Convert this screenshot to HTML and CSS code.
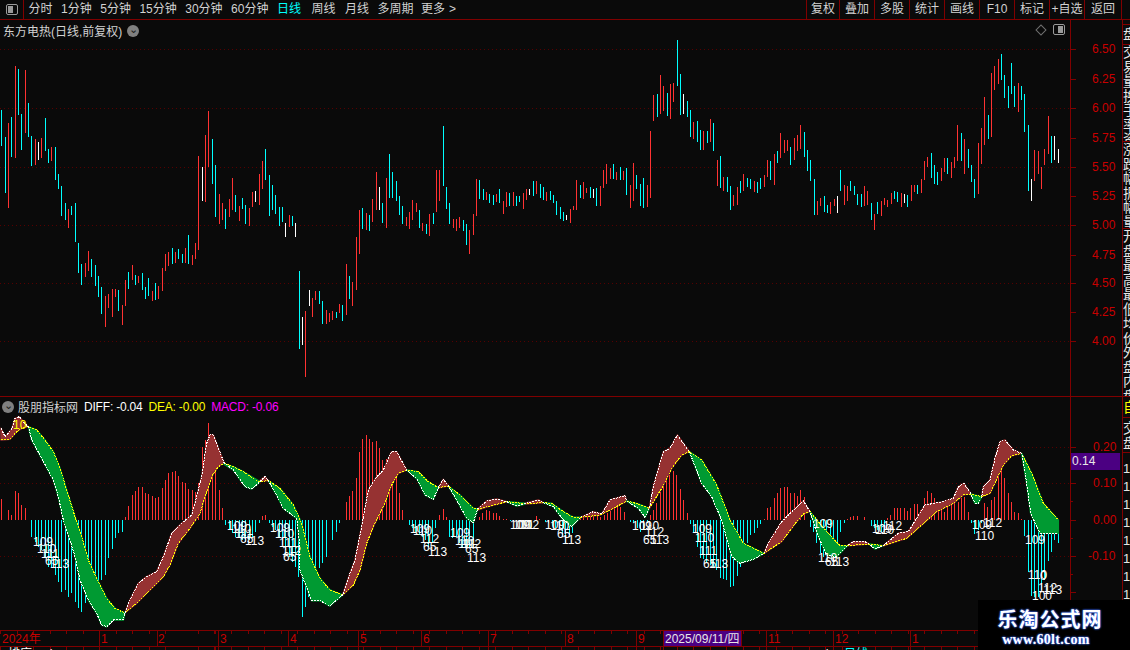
FILE: index.html
```html
<!DOCTYPE html>
<html lang="zh-CN">
<head>
<meta charset="utf-8">
<title>东方电热</title>
<link rel="stylesheet" href="styles.css">
</head>
<body>
<div class="app">
  <header class="toolbar">
    <div class="panel-toggle"><span class="toggle-icon"><i></i></span></div>
    <nav class="periods">
      <span>分时</span><span>1分钟</span><span>5分钟</span><span>15分钟</span><span>30分钟</span><span>60分钟</span>
      <span class="active">日线</span><span class="week">周线</span><span>月线</span><span>多周期</span><span class="more">更多<b>&gt;</b></span>
    </nav>
    <div class="actions">
      <span class="first">复权</span><span>叠加</span><span>多股</span><span>统计</span><span>画线</span><span>F10</span><span>标记</span><span>+自选</span><span class="last">返回</span>
    </div>
  </header>

  <section class="row row-kline">
    <div class="plot">
      <div class="plot-title title-kline">
        <span>东方电热(日线,前复权)</span><span class="chev">&#8964;</span>
      </div>
      <div class="plot-tools">
        <span class="diamond"></span><span class="toggle-icon mirrored"><i></i></span>
      </div>
      <svg class="chart chart-kline" viewBox="0 20 1122 376" aria-label="K线图">
        <path class="grid" d="M0 49.5H1070M0 108.5H1070M0 167.5H1070M0 225.5H1070M0 283.5H1070M0 341.5H1070"/>
        <path class="axis" d="M1070.5 20V396M1070 49.5h6M1070 79.5h6M1070 108.5h6M1070 138.5h6M1070 167.5h6M1070 196.5h6M1070 225.5h6M1070 255.5h6M1070 283.5h6M1070 312.5h6M1070 341.5h6"/>
        <g class="ax">
          <text x="1092" y="53">6.50</text><text x="1092" y="83">6.25</text><text x="1092" y="112">6.00</text><text x="1092" y="142">5.75</text><text x="1092" y="171">5.50</text><text x="1092" y="200">5.25</text><text x="1092" y="229">5.00</text><text x="1092" y="259">4.75</text><text x="1092" y="287">4.50</text><text x="1092" y="316">4.25</text><text x="1092" y="345">4.00</text>
        </g>
        <g transform="translate(0,40) scale(.33333)">
          <path class="k-red" d="M25 249V504M46 78V354M76 90V279M106 297V375M124 294V354M154 321V363M205 507V564M256 669V711M265 633V693M316 768V861M325 762V804M337 747V831M346 747V771M367 795V855M376 720V798M397 675V720M415 708V729M457 753V783M475 738V777M487 684V753M496 642V693M505 636V678M526 636V669M556 624V669M577 645V675M586 609V657M595 348V630M616 285V486M625 213V381M658 462V552M667 489V540M688 477V531M697 414V510M718 498V543M748 504V558M757 456V501M778 402V495M787 363V447M868 525V561"/>
          <path class="k-cyan" d="M4 210V318M16 291V459M34 231V351M55 87V225M64 222V330M85 189V291M94 288V378M136 234V333M145 327V369M166 321V420M175 402V447M184 438V528M196 489V540M214 498V525M226 489V606M235 609V699M244 672V735M274 657V711M286 675V738M295 708V771M304 741V822M355 750V813M385 696V747M406 705V735M427 699V750M436 741V777M445 714V768M466 729V780M517 624V672M535 627V657M547 642V669M565 585V672M637 297V432M646 375V531M676 507V567M706 465V516M727 474V507M736 495V552M796 327V420M808 405V528M817 435V510M826 465V522M838 501V558M847 501V546M877 528V558"/>
          <path class="k-white" d="M115 306V360M607 381V483M766 453V486M856 549V591M886 549V591"/>
        </g>
        <g transform="translate(290,120) scale(.33333)">
          <path class="k-red" d="M46 573V771M67 534V591M76 513V540M109 570V612M118 579V606M127 573V600M148 552V579M169 432V585M187 486V558M199 351V510M208 270V402M229 279V330M247 237V306M259 156V270M289 174V324M349 291V318M358 276V327M367 240V300M379 249V276M397 309V333M418 282V348M439 150V276M448 150V243M490 297V324M499 297V333M508 291V324M538 330V402M550 282V345M559 177V288M589 216V240M619 222V246M640 243V282M649 216V261M670 216V258M700 219V267M709 207V240M739 183V222M769 216V243M841 267V309M850 258V270M859 180V270M880 186V237M889 204V219"/>
          <path class="k-cyan" d="M28 453V687M88 513V552M97 543V612M139 576V594M157 555V603M178 468V537M217 264V327M238 285V333M277 249V309M298 102V234M307 156V234M319 183V243M328 228V285M337 258V312M388 270V324M409 312V342M430 279V312M460 18V198M469 201V267M478 249V312M520 300V333M529 312V375M568 180V237M580 207V240M598 222V249M610 225V255M628 207V249M658 219V258M679 228V258M688 228V246M730 183V228M751 192V234M760 201V240M781 213V240M790 225V249M799 243V285M811 261V297M820 276V303M871 195V234"/>
          <path class="k-white" d="M37 591V675M58 510V558M268 201V270M718 207V225M829 285V300"/>
        </g>
        <g transform="translate(590,30) scale(.33333)">
          <path class="k-red" d="M31 468V528M40 420V474M49 402V462M61 414V447M79 426V450M100 423V450M121 465V534M130 399V513M172 465V531M181 303V504M190 195V273M211 135V252M220 168V243M241 162V267M250 159V216M310 276V327M340 303V360M361 267V336M382 390V468M400 441V483M430 495V528M442 471V525M460 432V483M493 453V486M523 435V471M532 390V441M553 372V465M571 309V384M583 330V369M592 330V363M613 324V390M622 315V363M631 285V357M682 513V555M691 504V528M721 516V552M733 507V528M763 465V525M772 468V513"/>
          <path class="k-cyan" d="M0 471V504M19 474V528M70 402V447M91 411V450M109 414V495M139 435V477M151 462V528M160 444V534M202 192V261M232 189V258M262 30V168M271 132V255M292 213V261M301 240V321M322 273V336M331 300V360M352 303V339M370 279V363M391 378V474M412 441V486M421 468V540M451 453V489M472 444V471M481 447V477M502 456V489M511 444V477M541 393V450M562 363V399M601 351V405M643 306V381M652 360V423M661 390V453M673 447V555M703 498V546M712 525V549M751 420V483"/>
          <path class="k-white" d="M10 477V504M280 192V252M742 498V549"/>
        </g>
        <g transform="translate(850,30) scale(.33333)">
          <path class="k-red" d="M43 468V528M52 483V525M73 552V600M94 513V558M103 504V525M112 510V531M124 489V522M154 489V531M184 465V513M193 465V486M214 447V489M223 393V450M232 381V411M274 414V453M283 384V426M304 396V444M313 381V414M322 285V393M343 327V432M385 339V492M394 294V402M403 201V345M424 129V321M433 108V180M445 87V162M505 159V246M553 360V453M565 363V432M574 411V477M583 357V405M595 258V372"/>
          <path class="k-cyan" d="M1 453V483M13 468V495M22 492V525M34 492V531M64 519V570M82 516V552M133 483V507M142 486V516M172 495V531M202 465V492M244 369V444M253 405V462M262 426V465M292 384V432M334 309V393M355 357V414M364 405V456M373 447V504M415 255V327M454 72V150M463 135V204M475 168V234M484 99V192M493 168V231M514 168V210M523 192V306M535 285V483M604 318V399"/>
          <path class="k-white" d="M163 492V519M544 447V513M613 318V390M625 357V399"/>
        </g>
      </svg>
    </div>
    <aside class="side">
      <div class="side-sec sec-blank"></div>
      <div class="side-sec sec-box"><p class="side-text">盘</p></div>
      <div class="side-sec sec-a"><p class="side-text">交易量换手率资金</p></div>
      <div class="side-sec sec-b"><p class="side-text">涨跌幅振幅量比</p></div>
      <div class="side-sec sec-c"><p class="side-text">开盘最高最低均价外盘内盘总手总额流通市值</p></div>
    </aside>
  </section>

  <section class="row row-macd">
    <div class="plot">
      <div class="plot-title title-macd">
        <span class="chev">&#8964;</span><span class="indicator">股朋指标网</span>
        <span class="v-diff">DIFF: -0.04</span><span class="v-dea">DEA: -0.00</span><span class="v-macd">MACD: -0.06</span>
      </div>
      <svg class="chart chart-macd" viewBox="0 397 1122 233" aria-label="MACD指标">
        <path class="grid" d="M0 447.5H1070M0 483.5H1070M0 556.5H1070"/>
        <path class="axis" d="M1070.5 397V630M1070 447.5h6M1070 465.5h3M1070 483.5h6M1070 501.5h3M1070 520.5h6M1070 538.5h3M1070 556.5h6M1070 574.5h3M1070 592.5h6"/>
        <rect class="tag" x="1071" y="453" width="49" height="17"/>
        <text class="tag-text" x="1072" y="465">0.14</text>
        <g class="ax">
          <text x="1093" y="451">0.20</text><text x="1093" y="487">0.10</text><text x="1093" y="524">0.00</text><text x="1088" y="560">-0.10</text>
        </g>

        <g transform="translate(0,390) scale(.33333)">
          <path class="h-red" d="M4 391V328M25 391V360M34 391V375M46 391V303M55 391V309M64 391V345M76 391V354M85 391V390M376 391V380M385 391V347M397 391V315M406 391V302M415 391V291M427 391V291M436 391V310M445 391V312M457 391V318M466 391V325M475 391V322M487 391V295M496 391V270M505 391V248M517 391V245M526 391V243M535 391V258M547 391V275M556 391V280M565 391V297M577 391V300M586 391V305M595 391V280M607 391V170M616 391V150M625 391V98M637 391V135M646 391V240M658 391V300M667 391V355M787 391V378M796 391V375"/>
          <path class="h-cyan" d="M94 391V442M106 391V455M115 391V470M124 391V480M136 391V505M145 391V530M154 391V535M166 391V555M175 391V575M184 391V606M196 391V600M205 391V622M214 391V610M226 391V635M235 391V655M244 391V665M256 391V640M265 391V620M274 391V610M286 391V590M295 391V580M304 391V570M316 391V555M325 391V505M337 391V478M346 391V445M355 391V430M367 391V425M676 391V405M688 391V420M697 391V430M706 391V440M718 391V445M727 391V450M736 391V455M748 391V450M757 391V440M766 391V425M778 391V400M808 391V400M817 391V410M826 391V420M838 391V440M847 391V465M856 391V480M868 391V500M877 391V515M886 391V530M895 391V560M907 391V680M916 391V650M925 391V620M937 391V560M946 391V545M958 391V533M967 391V520M979 391V500"/>
        </g>
        <g transform="translate(330,400) scale(.33333)">
          <path class="h-red" d="M49 361V305M58 361V288M67 361V272M79 361V235M88 361V155M97 361V118M109 361V105M118 361V118M127 361V125M139 361V123M148 361V145M157 361V180M169 361V178M178 361V205M187 361V215M199 361V225M208 361V280M217 361V330M229 361V359M328 361V345M340 361V326M349 361V350M448 361V350M457 361V340M469 361V330M478 361V332M490 361V340M499 361V340M508 361V348M520 361V357M529 361V357M619 361V347M628 361V358M751 361V355M760 361V352M772 361V350M781 361V345M790 361V335M802 361V345M811 361V350M823 361V345M832 361V340M841 361V333M853 361V323M862 361V318M871 361V322M883 361V335M892 361V360"/>
          <path class="h-cyan" d="M7 361V420M19 361V395M28 361V370M238 361V375M247 361V385M256 361V395M268 361V405M277 361V410M286 361V420M295 361V440M307 361V430M316 361V385M358 361V410M367 361V413M379 361V412M388 361V430M397 361V440M409 361V445M418 361V440M430 361V420M541 361V363M550 361V365M646 361V365M655 361V370M667 361V378M676 361V385M688 361V390M697 361V410M706 361V430M718 361V405M727 361V400M901 361V365M910 361V370M922 361V385M931 361V395M940 361V385M952 361V370"/>
        </g>
        <g transform="translate(640,400) scale(.33333)">
          <path class="h-red" d="M31 361V345M40 361V330M49 361V310M61 361V275M70 361V258M79 361V240M88 361V225M100 361V213M109 361V225M121 361V267M130 361V300M142 361V338M373 361V358M382 361V325M391 361V320M403 361V295M412 361V280M421 361V263M433 361V262M442 361V262M451 361V280M463 361V278M472 361V288M481 361V270M493 361V290M622 361V358M631 361V352M640 361V348M652 361V348M661 361V360M673 361V350M682 361V360M742 361V355M751 361V345M763 361V325M772 361V325"/>
          <path class="h-cyan" d="M151 361V372M160 361V400M172 361V440M181 361V473M190 361V478M199 361V485M211 361V495M220 361V505M229 361V510M241 361V535M250 361V537M259 361V540M271 361V562M280 361V558M292 361V528M301 361V500M310 361V455M322 361V430M331 361V405M343 361V400M352 361V385M361 361V372M511 361V380M520 361V395M529 361V430M541 361V460M550 361V470M559 361V465M571 361V445M580 361V420M592 361V425M601 361V395M613 361V370M694 361V378M703 361V385M712 361V390M724 361V395M733 361V380"/>
        </g>
        <g transform="translate(900,390) scale(.33333)">
          <path class="h-red" d="M3 391V354M13 391V354M22 391V362M31 391V355M43 391V343M52 391V342M61 391V360M73 391V325M82 391V304M94 391V310M103 391V325M115 391V350M124 391V345M133 391V365M142 391V350M154 391V345M163 391V340M175 391V335M184 391V325M193 391V322M205 391V365M253 391V338M262 391V350M274 391V330M283 391V320M295 391V245M304 391V235M313 391V265M325 391V310M334 391V335M343 391V365M355 391V370M364 391V388"/>
          <path class="h-cyan" d="M214 391V400M223 391V432M235 391V420M244 391V400M373 391V438M385 391V545M394 391V618M403 391V620M415 391V620M424 391V600M433 391V570M445 391V512M454 391V485M463 391V450M475 391V458"/>
        </g>

        <g transform="translate(0,390) scale(.33333)">
          <path class="up" d="M3 115L15 140L35 118L45 85L58 80L70 95L85 110L70 112L50 125L30 148L3 150ZM375 668L390 630L415 580L440 560L470 545L490 500L515 430L545 400L575 375L590 320L605 260L620 160L630 135L640 135L672 218L655 230L635 260L615 320L600 370L570 415L535 460L510 525L490 560L440 610L410 640ZM780 272L795 260L805 272Z"/>
          <path class="dn" d="M85 110L95 150L125 205L160 270L175 320L190 390L210 450L225 500L240 570L265 630L290 670L305 705L320 710L340 690L370 690L375 668L370 667L345 655L320 625L290 565L265 510L245 440L225 380L200 300L180 235L160 185L135 150L110 120ZM672 222L700 240L735 290L755 297L775 280L780 275L730 245L700 230ZM805 272L830 315L850 355L890 385L900 470L900 540L915 580L935 632L960 632L990 648L990 600L960 565L930 500L905 400L880 345L840 295Z"/>
          <path class="dea" d="M3 150L30 148L50 125L70 112L85 110L110 120L135 150L160 185L180 235L200 300L225 380L245 440L265 510L290 565L320 625L345 655L370 667L375 668L410 640L440 610L490 560L510 525L535 460L570 415L600 370L615 320L635 260L655 230L672 220L700 230L730 245L775 275L805 272L840 295L880 345L905 400L930 500L960 565L990 600"/>
          <path class="diff" d="M3 115L15 140L35 118L45 85L58 80L70 95L85 110L95 150L125 205L160 270L175 320L190 390L210 450L225 500L240 570L265 630L290 670L305 705L320 710L340 690L370 690L375 668L390 630L415 580L440 560L470 545L490 500L515 430L545 400L575 375L590 320L605 260L620 160L630 135L640 135L672 218L700 240L735 290L755 297L775 280L795 260L805 272L830 315L850 355L890 385L900 470L900 540L915 580L935 632L960 632L990 648"/>
        </g>
        <g transform="translate(330,400) scale(.33333)">
          <path class="up" d="M38 585L60 520L75 480L95 380L115 270L140 230L160 210L185 155L200 155L230 210L205 220L185 255L160 320L130 380L110 430L90 510L70 555ZM325 263L340 238L355 258ZM443 327L470 303L500 297L530 305L480 318L443 330ZM585 310L625 300L640 308L585 312ZM752 352L790 335L815 342L840 300L885 287L890 303L850 325L810 345Z"/>
          <path class="dn" d="M0 570L38 585L0 617ZM230 210L262 238L285 285L310 298L325 263L295 245L265 215ZM355 258L380 300L410 355L430 368L443 327L430 325L390 285ZM530 305L560 318L585 312L585 310ZM640 308L670 320L700 360L725 380L752 352L730 352L700 335L665 310ZM890 303L925 325L945 352L958 325L925 312Z"/>
          <path class="dea" d="M0 570L38 585L70 555L90 510L110 430L130 380L160 320L185 255L205 220L230 210L265 215L295 245L325 263L355 258L390 285L430 325L443 328L480 318L530 305L585 311L640 308L665 310L700 335L730 352L752 352L810 345L850 325L890 303L925 312L958 325"/>
          <path class="diff" d="M0 617L38 585L60 520L75 480L95 380L115 270L140 230L160 210L185 155L200 155L230 210L262 238L285 285L310 298L325 263L340 238L355 258L380 300L410 355L430 368L443 327L470 303L500 297L530 305L560 318L585 311L625 300L640 308L670 320L700 360L725 380L752 352L790 335L815 342L840 300L885 287L890 303L925 325L945 352L958 325"/>
        </g>
        <g transform="translate(640,400) scale(.33333)">
          <path class="up" d="M28 325L40 260L70 155L90 145L112 105L148 155L125 165L95 205L65 265ZM372 460L385 430L425 365L490 302L510 335L490 342L470 365L425 425ZM622 437L640 425L675 425L687 432Z"/>
          <path class="dn" d="M148 155L185 250L215 290L245 360L275 470L300 490L340 478L372 460L310 430L270 360L230 255L185 180ZM510 335L535 410L560 465L590 470L622 437L600 437L560 395ZM687 432L705 447L730 437Z"/>
          <path class="dea" d="M28 325L65 265L95 205L125 165L148 155L185 180L230 255L270 360L310 430L372 460L425 425L470 365L490 342L510 335L560 395L600 437L622 437L687 432L730 437"/>
          <path class="diff" d="M28 325L40 260L70 155L90 145L112 105L148 155L185 250L215 290L245 360L275 470L300 490L340 478L372 460L385 430L425 365L490 302L510 335L535 410L560 465L590 470L622 437L640 425L675 425L687 432L705 447L730 437"/>
        </g>
        <g transform="translate(900,390) scale(.33333)">
          <path class="up" d="M-50 467L-5 430L25 425L75 345L130 335L160 325L175 290L192 280L212 310L190 315L160 340L110 365L20 445ZM245 320L250 290L270 270L285 205L300 155L315 150L340 180L365 190L335 197L310 225L270 310Z"/>
          <path class="dn" d="M212 312L225 340L235 340L245 320ZM365 190L380 280L392 370L420 430L475 430L475 390L430 340L395 250Z"/>
          <path class="dea" d="M-50 467L20 445L110 365L160 340L190 315L212 312L245 320L270 310L310 225L335 197L365 190L395 250L430 340L475 390"/>
          <path class="diff" d="M-50 467L-5 430L25 425L75 345L130 335L160 325L175 290L192 280L212 310L225 340L235 340L245 320L250 290L270 270L285 205L300 155L315 150L340 180L365 190L380 280L392 370L420 430L475 430"/>
        </g>

        <text class="sig-y" x="13" y="429">10</text>
        <g class="sig">
          <text x="33" y="546">109</text><text x="37" y="553">110</text><text x="41" y="558">111</text><text x="45" y="565">65</text><text x="50" y="568">113</text>
          <text x="227" y="530">109</text><text x="232" y="533">110</text><text x="235" y="538">111</text><text x="240" y="543">65</text><text x="245" y="545">113</text>
          <text x="270" y="532">109</text><text x="275" y="538">110</text><text x="279" y="547">111</text><text x="282" y="555">112</text><text x="283" y="561">65</text>
          <text x="410" y="533">109</text><text x="413" y="535">110</text><text x="420" y="543">112</text><text x="423" y="551">65</text><text x="428" y="556">113</text>
          <text x="450" y="537">109</text><text x="455" y="545">110</text><text x="458" y="548">111</text><text x="462" y="548">112</text><text x="465" y="553">65</text><text x="467" y="562">113</text>
          <text x="510" y="529">109</text><text x="513" y="529">110</text><text x="516" y="529">111</text><text x="520" y="529">112</text>
          <text x="545" y="529">109</text><text x="550" y="530">110</text><text x="557" y="538">65</text><text x="562" y="544">113</text>
          <text x="632" y="530">109</text><text x="640" y="530">110</text><text x="645" y="536">112</text><text x="643" y="544">65</text><text x="650" y="544">113</text>
          <text x="692" y="533">109</text><text x="695" y="542">110</text><text x="699" y="555">111</text><text x="703" y="568">65</text><text x="709" y="568">113</text>
          <text x="813" y="528">109</text><text x="818" y="562">110</text><text x="825" y="566">65</text><text x="830" y="566">113</text>
          <text x="872" y="533">109</text><text x="875" y="534">110</text><text x="883" y="530">112</text>
          <text x="972" y="529">109</text><text x="975" y="540">110</text><text x="983" y="527">112</text>
          <text x="1025" y="544">109</text><text x="1028" y="579">110</text><text x="1040" y="580">0</text><text x="1038" y="592">112</text><text x="1043" y="594">113</text><text x="1032" y="600">100</text>
        </g>
      </svg>
    </div>
    <aside class="side">
      <div class="side-sec sec-d"><p class="side-text side-yellow">自</p></div>
      <div class="side-sec sec-e"><p class="side-text">交盘</p></div>
      <div class="side-sec sec-f"><p class="side-text side-digits">1 1 1 1 1 1 1 1 1</p></div>
    </aside>
  </section>

  <footer class="timeline">
    <svg class="chart chart-time" viewBox="0 630 1130 20" aria-label="时间轴">
      <path class="axis" d="M0 630.5H1130M0 646.5H1130M99.5 630V650M157.5 630V646M218.5 630V650M288.5 630V646M358.5 630V650M421.5 630V646M488.5 630V650M565.5 630V646M636.5 630V650M663.5 630V650M741.5 630V646M766.5 630V650M833.5 630V650M910.5 630V650"/>
      <path class="ticks" d="M0 632H1130M0 648H1130"/>
      <rect class="tag" x="664" y="631" width="77" height="15"/>
      <text class="tag-text" x="665" y="643">2025/09/11/四</text>
      <g class="ax">
        <text x="2" y="643">2024年</text><text x="101" y="643">1</text><text x="158" y="643">2</text><text x="220" y="643">3</text><text x="290" y="643">4</text><text x="360" y="643">5</text><text x="423" y="643">6</text><text x="490" y="643">7</text><text x="567" y="643">8</text><text x="638" y="643">9</text><text x="768" y="643">11</text><text x="835" y="643">12</text><text x="912" y="643">1</text>
      </g>
      <text class="strip-white" x="8" y="658">排序</text>
      <text class="strip-white" x="50" y="658">'</text>
      <text class="strip-white" x="826" y="658">'</text>
      <text class="strip-cyan" x="844" y="658">日线</text>
    </svg>
  </footer>

  <aside class="watermark">
    <div class="wm-name">乐淘公式网</div>
    <div class="wm-url">www.60lt.com</div>
  </aside>
</div>
</body>
</html>
```

FILE: styles.css
```css
* { box-sizing: border-box; margin: 0; padding: 0; }

html, body { background: #0a0a0a; }

body {
  width: 1130px;
  height: 650px;
  overflow: hidden;
  font-family: "Liberation Sans", "Noto Sans CJK SC", sans-serif;
  font-size: 12px;
  color: #d2d2d2;
}

.app {
  position: relative;
  width: 1130px;
  height: 650px;
  display: flex;
  flex-direction: column;
  overflow: hidden;
}

/* toolbar */
.toolbar {
  flex: 0 0 20px;
  display: flex;
  align-items: stretch;
  border-bottom: 1px solid #800000;
  line-height: 19px;
}

.panel-toggle {
  width: 24px;
  border-right: 1px solid #800000;
  display: flex;
  align-items: center;
  justify-content: center;
}

.toggle-icon {
  display: inline-flex;
  justify-content: flex-end;
  width: 12px;
  height: 11px;
  border: 1px solid #9a9a9a;
  border-radius: 2px;
  padding: 1px;
}

.toggle-icon i {
  display: block;
  width: 5px;
  background: #9a9a9a;
}

.panel-toggle .toggle-icon { justify-content: flex-start; }

.periods {
  display: flex;
  gap: 8.5px;
  padding-left: 4.5px;
  white-space: nowrap;
}

.periods .active { color: #00ffff; margin-right: 2px; }
.periods .week { margin-right: 1px; }
.periods .more { margin-left: -1px; }
.periods .more b { font-weight: 400; margin-left: 4px; }

.actions {
  margin-left: auto;
  margin-right: 8px;
  display: flex;
}

.actions span {
  width: 35px;
  text-align: center;
  border-left: 1px solid #800000;
  white-space: nowrap;
}

.actions .first { width: 33px; }
.actions .last { width: 38px; border-right: 1px solid #800000; }

/* rows */
.row { display: flex; }
.row-kline { flex: 0 0 377px; border-bottom: 1px solid #800000; }
.row-macd { flex: 0 0 233px; }

.plot { position: relative; width: 1122px; }

.chart { display: block; }
.chart-kline { width: 1122px; height: 376px; }
.chart-macd { width: 1122px; height: 233px; }
.chart-time { width: 1130px; height: 20px; }

.timeline { flex: 0 0 20px; }

.plot-title {
  position: absolute;
  display: flex;
  align-items: center;
  white-space: nowrap;
}

.title-kline { left: 3px; top: 2px; gap: 5px; }
.title-macd { left: 2px; top: 1px; }

.chev {
  width: 12px;
  height: 12px;
  border-radius: 50%;
  background: #808080;
  color: #1a1a1a;
  font-size: 11px;
  line-height: 8px;
  text-align: center;
  overflow: hidden;
}

.indicator { margin-left: 4px; margin-right: 6px; }
.v-diff, .v-dea, .v-macd { letter-spacing: -.2px; }
.v-diff { color: #fff; margin-right: 6px; }
.v-dea { color: #ffff00; margin-right: 6px; }
.v-macd { color: #ff00ff; }

.plot-tools {
  position: absolute;
  top: 4px;
  left: 1037px;
  display: flex;
  align-items: center;
  gap: 8px;
}

.diamond {
  width: 8px;
  height: 8px;
  border: 1px solid #707070;
  transform: rotate(45deg);
}

/* chart strokes */
.grid {
  fill: none;
  stroke: #560000;
  stroke-dasharray: 1 3;
  shape-rendering: crispEdges;
}

.axis {
  fill: none;
  stroke: #800000;
  shape-rendering: crispEdges;
}

.ticks {
  fill: none;
  stroke: #800000;
  stroke-width: 3;
  stroke-dasharray: 1 15.5;
  shape-rendering: crispEdges;
}

.k-red, .k-cyan, .k-white, .h-red, .h-cyan {
  fill: none;
  stroke-width: 1px;
  vector-effect: non-scaling-stroke;
  shape-rendering: crispEdges;
}

.k-red, .h-red { stroke: #ff3232; }
.k-cyan, .h-cyan { stroke: #00ffff; }
.k-white { stroke: #ffffff; }

.up, .dn {
  stroke-width: 1.5px;
  vector-effect: non-scaling-stroke;
  stroke-linejoin: round;
}

.up { fill: #963232; stroke: #963232; }
.dn { fill: #009a32; stroke: #009a32; }

.dea, .diff {
  fill: none;
  stroke-width: 1px;
  vector-effect: non-scaling-stroke;
  stroke-dasharray: 2 1;
  stroke-linejoin: round;
  shape-rendering: crispEdges;
}

.dea { stroke: #ffff00; }
.diff { stroke: #ffffff; }

.ax text {
  fill: #c80000;
  font-size: 12px;
}

.tag { fill: #4b0082; }
.tag-text { fill: #e8e8e8; font-size: 12px; }
.sig text { fill: #ffffff; font-size: 12px; }
.sig-y { fill: #ffff00; font-size: 12px; }
.strip-white { fill: #ffffff; font-size: 12px; }
.strip-cyan { fill: #00ffff; font-size: 12px; }

/* right column */
.side {
  width: 8px;
  display: flex;
  flex-direction: column;
  border-left: 1px solid #800000;
  overflow: hidden;
  color: #e6e6e6;
}

.side-sec {
  overflow: hidden;
  border-bottom: 1px solid #800000;
}

.side-text {
  width: 14px;
  font-size: 14px;
  line-height: 14.5px;
  word-break: break-all;
}

.sec-blank { flex: 0 0 5px; }
.sec-box { flex: 0 0 20px; padding-top: 2px; }
.sec-a { flex: 0 0 97px; }
.sec-b { flex: 0 0 87px; }
.sec-c { flex: 1 1 0; border-bottom: 0; }
.sec-d { flex: 0 0 21px; padding-top: 3px; }
.sec-e { flex: 0 0 35px; padding-top: 3px; }
.sec-f { flex: 1 1 0; border-bottom: 0; padding-top: 7px; }
.side-yellow { color: #ffff00; }
.side-digits { line-height: 18px; font-size: 13px; }

/* watermark */
.watermark {
  position: absolute;
  right: 0;
  bottom: 0;
  width: 152px;
  height: 50px;
  background: #000;
  text-align: center;
  color: #fff;
  font-weight: 700;
  white-space: nowrap;
}

.wm-name {
  margin-top: 8px;
  padding-right: 8px;
  font-size: 20px;
  line-height: 24px;
  letter-spacing: 1px;
  text-shadow: 0 0 2px #3a6cff, 0 0 2px #3a6cff;
}

.wm-url {
  padding-right: 16px;
  font-family: "Liberation Serif", serif;
  font-size: 14px;
  line-height: 15px;
  letter-spacing: .3px;
  text-shadow: 0 0 2px #3a6cff, 0 0 2px #3a6cff;
}
```
